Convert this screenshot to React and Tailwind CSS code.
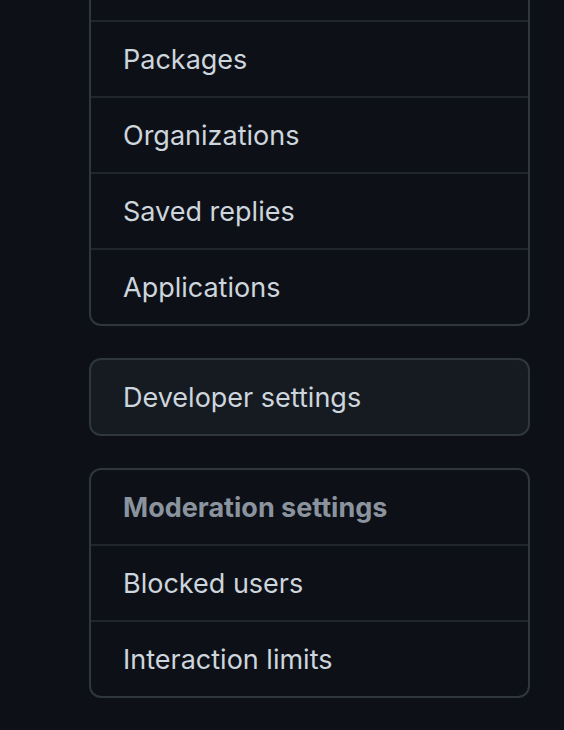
import React from 'react';

const groups = [
  {
    items: ['Repositories', 'Packages', 'Organizations', 'Saved replies', 'Applications'],
    offset: true,
  },
  { items: ['Developer settings'], filled: true },
  { heading: 'Moderation settings', items: ['Blocked users', 'Interaction limits'] },
];

function Row({ label, heading }) {
  return (
    <div
      className={
        'px-8 pt-[2px] text-[27px] leading-[72px] ' +
        (heading ? 'font-bold text-[#8b949e]' : 'text-[#cdd5dd]')
      }
    >
      {label}
    </div>
  );
}

export default function App() {
  return (
    <div
      className="min-h-[730px] w-full overflow-hidden bg-[#0d1117] pl-[89px] pr-[34px]"
      style={{ fontFamily: 'Inter, "Noto Sans", sans-serif' }}
    >
      <div className="flex flex-col gap-8">
        {groups.map((g, i) => {
          const rows = g.heading ? [g.heading, ...g.items] : g.items;
          return (
            <nav
              key={i}
              className={
                'flex flex-col divide-y-2 divide-[#21262d] rounded-xl border-2 border-[#30363d] ' +
                (g.filled ? 'bg-[#161b22] ' : '') +
                (g.offset ? '-mt-[56px]' : '')
              }
            >
              {rows.map((r, j) => (
                <Row key={r} label={r} heading={g.heading && j === 0} />
              ))}
            </nav>
          );
        })}
      </div>
    </div>
  );
}
